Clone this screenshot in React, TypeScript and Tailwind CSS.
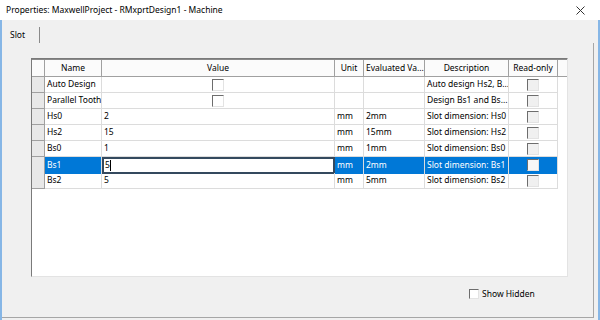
import React from 'react';

const COLS = 'grid grid-cols-[13px_57px_233px_29px_61px_84px_49px_1fr]';

type Row = {
  name: string;
  value: string | null;
  unit: string;
  evaluated: string;
  desc: string;
  selected?: boolean;
};

const rows: Row[] = [
  { name: 'Auto Design', value: null, unit: '', evaluated: '', desc: 'Auto design Hs2, B...' },
  { name: 'Parallel Tooth', value: null, unit: '', evaluated: '', desc: 'Design Bs1 and Bs...' },
  { name: 'Hs0', value: '2', unit: 'mm', evaluated: '2mm', desc: 'Slot dimension: Hs0' },
  { name: 'Hs2', value: '15', unit: 'mm', evaluated: '15mm', desc: 'Slot dimension: Hs2' },
  { name: 'Bs0', value: '1', unit: 'mm', evaluated: '1mm', desc: 'Slot dimension: Bs0' },
  { name: 'Bs1', value: '5', unit: 'mm', evaluated: '2mm', desc: 'Slot dimension: Bs1', selected: true },
  { name: 'Bs2', value: '5', unit: 'mm', evaluated: '5mm', desc: 'Slot dimension: Bs2' },
];

function Check({ fill = 'bg-white', size = 'w-[12px] h-[12px]' }: { fill?: string; size?: string }) {
  return (
    <span
      className={`block border border-t-[#6d6d6d] border-l-[#6d6d6d] border-r-[#e3e3e3] border-b-[#e3e3e3] ${size} ${fill}`}
    />
  );
}

function HeadCell({ children, left }: { children?: React.ReactNode; left?: boolean }) {
  return (
    <div
      className={`h-full flex items-center border-r border-[#a0a0a0] overflow-hidden whitespace-nowrap ${
        left ? 'justify-start pl-[2px]' : 'justify-center'
      }`}
    >
      {children}
    </div>
  );
}

function Cell({
  children,
  sel,
  center,
}: {
  children?: React.ReactNode;
  sel?: boolean;
  center?: boolean;
}) {
  return (
    <div
      className={`h-full flex items-center border-r border-b border-[#dcdcdc] overflow-hidden whitespace-nowrap ${
        center ? 'justify-center' : 'pl-[2px]'
      } ${sel ? 'bg-[#0078d7] text-white border-b-[#0078d7]' : 'text-black'}`}
    >
      {children}
    </div>
  );
}

function GridRow({ row }: { row: Row }) {
  const sel = !!row.selected;
  return (
    <div className={`${COLS} h-[16px]`}>
      <div className="h-full bg-[#e8e8e8] border-r border-b border-[#a0a0a0]" />
      <Cell sel={sel}>{row.name}</Cell>
      {row.value === null ? (
        <Cell center>
          <Check />
        </Cell>
      ) : sel ? (
        <div className="h-full flex items-center bg-white border-2 border-[#34495e] pl-[1px] text-black">
          {row.value}
          <span className="w-px h-[11px] bg-black" />
        </div>
      ) : (
        <Cell>{row.value}</Cell>
      )}
      <Cell sel={sel}>{row.unit}</Cell>
      <Cell sel={sel}>{row.evaluated}</Cell>
      <Cell sel={sel}>{row.desc}</Cell>
      <Cell sel={sel} center>
        <Check fill={sel ? 'bg-[#f7f7f7]' : 'bg-[#f0f0f0]'} />
      </Cell>
      <div className="h-full bg-white" />
    </div>
  );
}

export default function App() {
  return (
    <div
      className="w-[600px] h-[320px] flex flex-col bg-[#f0f0f0] overflow-hidden text-[8.5px] text-[#1a1a1a]"
      style={{ fontFamily: '"Noto Sans", "Noto Sans CJK SC", sans-serif' }}
    >
      <div className="h-[20px] shrink-0 bg-white flex items-center justify-between pl-[6px] pr-[15px]">
        <span className="text-[8.5px] text-black">Properties: MaxwellProject - RMxprtDesign1 - Machine</span>
        <svg width="9" height="9" viewBox="0 0 9 9" className="text-[#333]">
          <path d="M0.5 0.5 L8.5 8.5 M8.5 0.5 L0.5 8.5" stroke="currentColor" strokeWidth="1" />
        </svg>
      </div>

      <div className="flex-1 flex flex-col border-l-2 border-r-2 border-[#86b6e6]">
        <div className="h-[23px] shrink-0 flex items-end">
          <div className="w-[38px] h-[16px] border-r border-[#8a8a8a] flex items-center pl-[8px] text-black">
            Slot
          </div>
        </div>

        <div className="flex-1 flex flex-col mr-[4px] mb-[2px] border-r border-b border-[#a6a6a6]">
          <div className="mt-[15px] ml-[29px] w-[537px] h-[219px] bg-white border border-t-[#7a7a7a] border-l-[#7a7a7a] border-r-[#e3e3e3] border-b-[#e3e3e3] flex flex-col">
            <div className={`${COLS} h-[18px] shrink-0 bg-[#fbfbfb] border-t border-b border-t-[#8a8a8a] border-b-[#a0a0a0] text-black`}>
              <HeadCell />
              <HeadCell>Name</HeadCell>
              <HeadCell>Value</HeadCell>
              <HeadCell>Unit</HeadCell>
              <HeadCell left>Evaluated Va...</HeadCell>
              <HeadCell>Description</HeadCell>
              <HeadCell>Read-only</HeadCell>
              <div className="h-full" />
            </div>
            {rows.map((r) => (
              <GridRow key={r.name} row={r} />
            ))}
          </div>

          <div className="mt-[11px] ml-[467px] flex items-center gap-[3px] text-black">
            <Check size="w-[10px] h-[10px]" />
            <span>Show Hidden</span>
          </div>
        </div>
      </div>
    </div>
  );
}
